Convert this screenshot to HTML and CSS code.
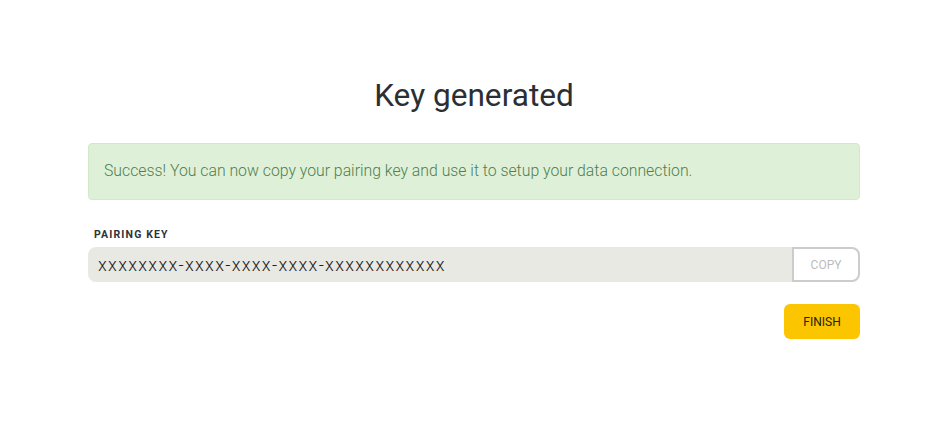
FILE: index.html
```html
<!DOCTYPE html>
<html>
<head>
<meta charset="utf-8">
<link rel="stylesheet" href="styles.css">
</head>
<body>
<main class="container">
  <h1 class="title">Key generated</h1>
  <div class="alert">Success! You can now copy your pairing key and use it to setup your data connection.</div>
  <label class="label">PAIRING KEY</label>
  <div class="key-row">
    <div class="key-field">xxxxxxxx-xxxx-xxxx-xxxx-xxxxxxxxxxxx</div>
    <button class="copy-btn">COPY</button>
  </div>
  <div class="actions">
    <button class="finish-btn">FINISH</button>
  </div>
</main>
</body>
</html>
```
FILE: styles.css
```css
html, body {
  margin: 0;
  padding: 0;
  background: #ffffff;
  font-family: Roboto, "Liberation Sans", sans-serif;
}
.container {
  width: 772px;
  margin-left: 88px;
  padding-top: 77px;
  display: flex;
  flex-direction: column;
}
.title {
  margin: 0;
  font-size: 31.6px;
  line-height: 38px;
  font-weight: 400;
  color: #2b2f33;
  text-align: center;
}
.alert {
  margin-top: 28px;
  background: #dff0d8;
  border: 1px solid #d3e8c9;
  border-radius: 4px;
  padding: 16px 15px 17px;
  font-size: 15.8px;
  line-height: 22px;
  font-weight: 300;
  color: #4f7f4e;
}
.label {
  margin-top: 28px;
  padding-left: 6px;
  font-size: 10.5px;
  line-height: 13px;
  font-weight: 700;
  letter-spacing: 1.15px;
  color: #2d3338;
}
.key-row {
  margin-top: 6px;
  display: flex;
  height: 35px;
}
.key-field {
  flex: 1;
  background: #e9e9e4;
  border-radius: 8px 0 0 8px;
  padding-left: 10px;
  font-size: 18px;
  line-height: 35px;
  font-weight: 300;
  letter-spacing: 1.3px;
  color: #1e1e1e;
}
.copy-btn {
  width: 68px;
  height: 35px;
  box-sizing: border-box;
  background: #ffffff;
  border: 2px solid #cccccc;
  border-radius: 0 8px 8px 0;
  font-family: Roboto, "Liberation Sans", sans-serif;
  font-size: 12px;
  color: #bcbcbc;
  padding: 0;
}
.actions {
  margin-top: 22px;
  display: flex;
  justify-content: flex-end;
}
.finish-btn {
  width: 76px;
  height: 35px;
  background: #fbc500;
  border: none;
  border-radius: 6px;
  font-family: Roboto, "Liberation Sans", sans-serif;
  font-size: 12px;
  color: #222211;
  padding: 0;
}
```
